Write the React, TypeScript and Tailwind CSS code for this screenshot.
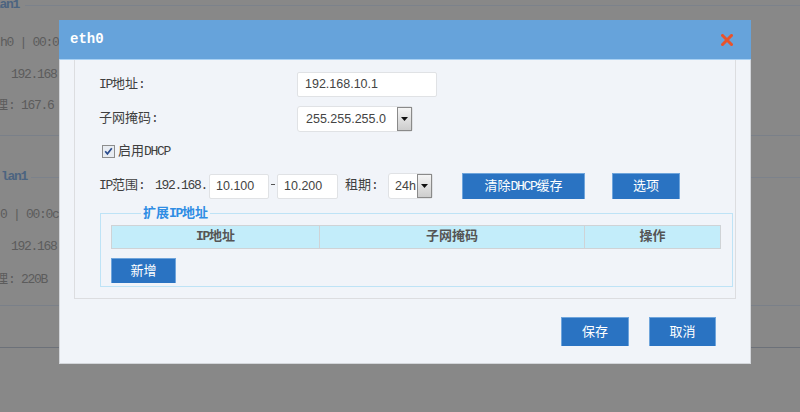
import React from "react";

const A = ({ children }: { children: React.ReactNode }) => (
  <span className="tracking-[-1.3px]">{children}</span>
);

function Background() {
  return (
    <div className="flex flex-col w-[800px] text-[#5c5c5c] font-['Liberation_Mono','Noto_Sans_CJK_SC',monospace] text-[13px]">
      <div className="h-[10px] flex items-center">
        <span className="ml-[-7px] font-bold text-[#4c6480] tracking-[-1.3px] leading-[10px]">lan1</span>
        <div className="flex-1 h-px bg-[#7c828b] ml-[6px]" />
      </div>
      <div className="mt-[23px] h-[20px] flex items-center whitespace-nowrap">
        <A>h0 | 00:0</A>
      </div>
      <div className="mt-[12px] h-[20px] flex items-center pl-[11px] whitespace-nowrap">
        <A>192.168</A>
      </div>
      <div className="mt-[11px] h-[20px] flex items-center whitespace-nowrap ml-[-5px]">
        <span>理</span>
        <A>: 167.6</A>
      </div>
      <div className="mt-[19px] h-px bg-[#7a8089]" />
      <div className="mt-[36px] h-[10px] flex items-center">
        <span className="ml-[1px] font-bold text-[#4c6480] tracking-[-1.3px] leading-[10px]">lan1</span>
        <div className="flex-1 h-px bg-[#7c828b] ml-[4px]" />
      </div>
      <div className="mt-[23px] h-[20px] flex items-center whitespace-nowrap">
        <A>0 | 00:0c</A>
      </div>
      <div className="mt-[12px] h-[20px] flex items-center pl-[11px] whitespace-nowrap">
        <A>192.168</A>
      </div>
      <div className="mt-[13px] h-[20px] flex items-center whitespace-nowrap ml-[-5px]">
        <span>理</span>
        <A>: 220B</A>
      </div>
      <div className="mt-[15px] h-px bg-[#7a8089]" />
      <div className="mt-[41px] h-px bg-[#6c7179]" />
    </div>
  );
}

function Dropdown() {
  return (
    <div className="w-[15px] h-full shrink-0 border border-[#8a8a8a] bg-linear-to-b from-[#f5f5f5] to-[#cdcdcd] flex items-center justify-center">
      <svg width="7" height="4" viewBox="0 0 7 4">
        <path d="M0 0H7L3.5 4Z" fill="#111" />
      </svg>
    </div>
  );
}

function Btn({ w, h, children }: { w: string; h: string; children: React.ReactNode }) {
  return (
    <div
      className={`${w} ${h} shrink-0 bg-[#2a73c2] border-t border-x border-[#6fa5dc] text-white text-[13px] flex items-center justify-center leading-none`}
    >
      {children}
    </div>
  );
}

function Dialog() {
  return (
    <div className="absolute left-[59px] top-[20px] w-[692px] h-[344px] flex flex-col font-['Liberation_Mono','Noto_Sans_CJK_SC',monospace] text-[13px] text-[#3f3f3f]">
      <div className="h-[40px] shrink-0 bg-[#66a3db] border-b border-[#a9d1f3] flex items-center justify-between pl-[11px] pr-[18px]">
        <span className="text-white font-bold text-[14px] font-['Liberation_Mono',monospace]">eth0</span>
        <svg width="12" height="12" viewBox="0 0 12 12">
          <path d="M1.5 1.5L10.5 10.5M10.5 1.5L1.5 10.5" stroke="#e9532b" strokeWidth="3" strokeLinecap="square" />
        </svg>
      </div>
      <div className="flex-1 bg-[#f1f4f9] border-x border-b border-[#d3d6da] flex flex-col">
        <div className="ml-[14px] w-[662px] h-[239px] shrink-0 border-x border-b border-[#dcdde0] flex flex-col pt-[12px]">
          <div className="ml-[24px] h-[25px] flex items-center">
            <div className="w-[198px] shrink-0">
              <A>IP</A>地址<A>:</A>
            </div>
            <div className="w-[140px] h-[25px] bg-white border border-[#e0e2e5] rounded-[2px] flex items-center pl-[7px] font-['Liberation_Sans',sans-serif] text-[12.5px] text-[#444]">
              192.168.10.1
            </div>
          </div>
          <div className="ml-[24px] mt-[9px] h-[26px] flex items-center">
            <div className="w-[198px] shrink-0">
              子网掩码<A>:</A>
            </div>
            <div className="w-[116px] h-[26px] bg-white border border-[#e0e2e5] rounded-[3px] flex items-center">
              <div className="flex-1 pl-[8px] font-['Liberation_Sans',sans-serif] text-[12.5px] text-[#444]">255.255.255.0</div>
              <Dropdown />
            </div>
          </div>
          <div className="ml-[27px] mt-[13px] h-[13px] flex items-center">
            <svg width="13" height="13" viewBox="0 0 13 13" className="shrink-0">
              <rect x="0.5" y="0.5" width="12" height="12" fill="#e8ecf2" stroke="#8d8d8d" />
              <path d="M3.2 6.3L5.4 8.9L9.8 3.3" stroke="#2b4c8e" strokeWidth="1.7" fill="none" />
            </svg>
            <span className="ml-[3px]">
              启用<A>DHCP</A>
            </span>
          </div>
          <div className="ml-[24px] mt-[15px] h-[26px] flex items-center">
            <div className="w-[56px] shrink-0">
              <A>IP</A>范围<A>:</A>
            </div>
            <div className="w-[54px] shrink-0">
              <A>192.168.</A>
            </div>
            <div className="w-[60px] h-[25px] shrink-0 bg-white border border-[#e0e2e5] rounded-[2px] flex items-center pl-[6px] font-['Liberation_Sans',sans-serif] text-[12.5px] text-[#444]">
              10.100
            </div>
            <div className="w-[8px] shrink-0 flex justify-center">
              <div className="w-[4px] h-px bg-[#555] mt-[-2px]" />
            </div>
            <div className="w-[61px] h-[25px] shrink-0 bg-white border border-[#e0e2e5] rounded-[2px] flex items-center pl-[6px] font-['Liberation_Sans',sans-serif] text-[12.5px] text-[#444]">
              10.200
            </div>
            <div className="ml-[7px] w-[43px] shrink-0">
              租期<A>:</A>
            </div>
            <div className="w-[45px] h-[26px] shrink-0 bg-white border border-[#e0e2e5] rounded-[3px] flex items-center">
              <div className="flex-1 pl-[6px] font-['Liberation_Sans',sans-serif] text-[12.5px] text-[#444]">24h</div>
              <Dropdown />
            </div>
            <div className="ml-[29px]">
              <Btn w="w-[123px]" h="h-[26px]">
                清除<A>DHCP</A>缓存
              </Btn>
            </div>
            <div className="ml-[27px]">
              <Btn w="w-[68px]" h="h-[26px]">选项</Btn>
            </div>
          </div>
          <fieldset className="ml-[25px] mt-[7px] w-[633px] border border-[#bee3f6] pb-[3px]">
            <legend className="ml-[40px] px-[2px] font-bold text-[#2f8de4] leading-[15px]">
              扩展<A>IP</A>地址
            </legend>
            <div className="mt-[4px] ml-[10px] w-[610px] h-[24px] flex bg-[#c3edfa] border border-[#cfd3d6] font-bold text-[#555]">
              <div className="w-[208px] flex items-center justify-center border-r border-[#cfd3d6]">
                <A>IP</A>地址
              </div>
              <div className="w-[265px] flex items-center justify-center border-r border-[#cfd3d6]">子网掩码</div>
              <div className="flex-1 flex items-center justify-center">操作</div>
            </div>
            <div className="mt-[9px] ml-[10px]">
              <Btn w="w-[65px]" h="h-[25px]">新增</Btn>
            </div>
          </fieldset>
        </div>
        <div className="mt-[18px] pr-[34px] flex justify-end gap-[20px]">
          <Btn w="w-[68px]" h="h-[29px]">保存</Btn>
          <Btn w="w-[67px]" h="h-[29px]">取消</Btn>
        </div>
      </div>
    </div>
  );
}

export default function App() {
  return (
    <div className="relative w-[800px] h-[412px] overflow-hidden bg-[#888888]">
      <Background />
      <Dialog />
    </div>
  );
}
